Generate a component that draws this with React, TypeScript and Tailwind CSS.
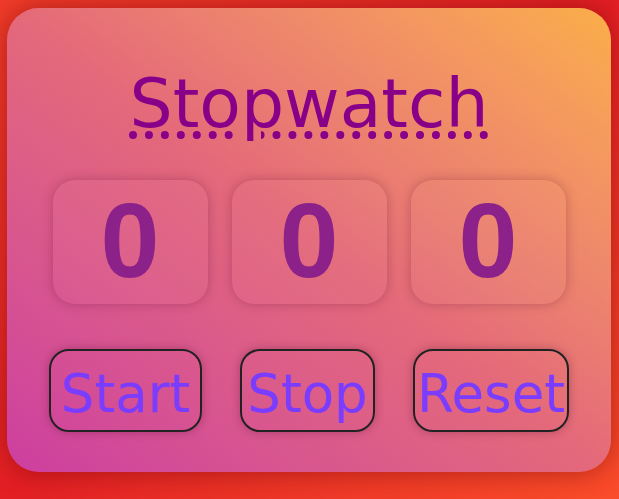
import React, { useEffect, useRef, useState } from "react";

export default function App() {
  const [running, setRunning] = useState(false);
  const [time, setTime] = useState(0);
  const timer = useRef<number | null>(null);

  useEffect(() => {
    if (running) {
      timer.current = window.setInterval(() => setTime((t) => t + 1), 10);
    }
    return () => {
      if (timer.current) window.clearInterval(timer.current);
    };
  }, [running]);

  const minutes = Math.floor(time / 6000);
  const seconds = Math.floor((time / 100) % 60);
  const hundredths = time % 100;

  const btn =
    "h-[83px] rounded-[20px] border-2 border-[#222] shadow-[0_0_10px_rgba(60,0,30,0.3)] flex items-center justify-center pt-[6px] text-[53px] leading-none text-[#7a3cff] whitespace-nowrap";

  return (
    <div className="w-full min-h-screen p-2 bg-linear-to-br from-[#f23c2a] via-[#e31e24] to-[#fb4c2a]">
      <div className="w-[604px] h-[464px] -ml-px rounded-[32px] bg-linear-to-tr from-[#cd3ea0] via-[#e4697a] to-[#fbae48] shadow-[0_0_28px_rgba(90,0,0,0.45)] flex flex-col items-center pt-[62px] font-['Comic_Sans_MS','DejaVu_Sans',sans-serif]">
        {/* Title */}
        <h1 className="text-[68px] leading-none text-[#880088] underline decoration-dotted decoration-8 underline-offset-[4px]">
          Stopwatch
        </h1>

        {/* Digits */}
        <div className="mt-[42px] flex gap-6">
          {[minutes, seconds, hundredths].map((v, i) => (
            <div
              key={i}
              className="w-[155px] h-[124px] rounded-[22px] bg-white/[0.03] shadow-[0_0_12px_rgba(80,0,40,0.28)] flex items-center justify-center pb-1"
            >
              <span className="text-[106px] leading-none font-bold text-[#8b2189] font-['Liberation_Sans',sans-serif]">
                {v}
              </span>
            </div>
          ))}
        </div>

        {/* Controls */}
        <div className="mt-[45px] flex gap-[38px]">
          <button onClick={() => setRunning(true)} className={`w-[153px] ${btn}`}>
            Start
          </button>
          <button onClick={() => setRunning(false)} className={`w-[135px] ${btn}`}>
            Stop
          </button>
          <button
            onClick={() => {
              setRunning(false);
              setTime(0);
            }}
            className={`w-[156px] ${btn}`}
          >
            Reset
          </button>
        </div>
      </div>
    </div>
  );
}
